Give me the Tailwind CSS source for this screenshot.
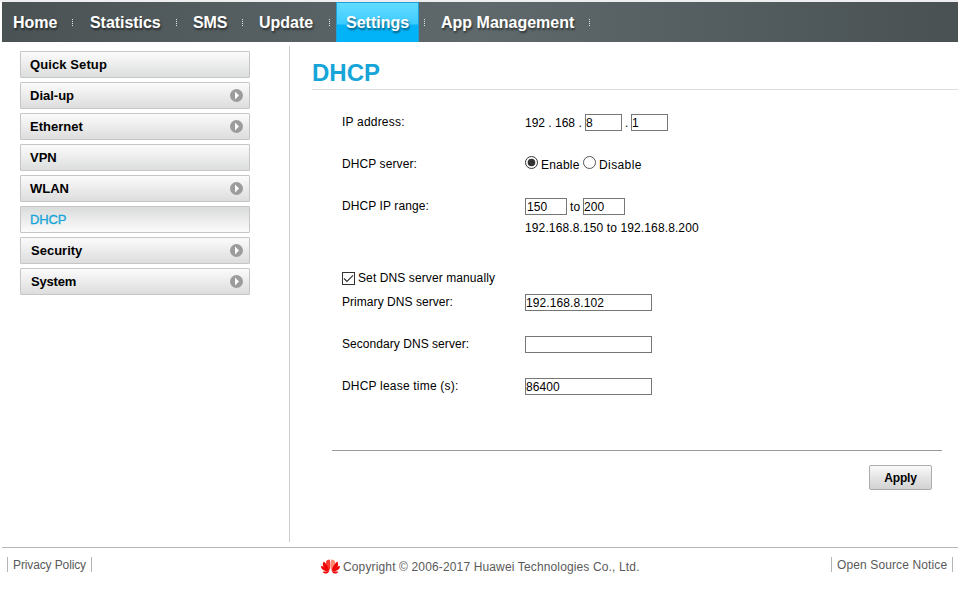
<!DOCTYPE html>
<html lang="en">
  <head>
    <meta charset="UTF-8" />
    <meta name="viewport" content="width=device-width, initial-scale=1.0" />
    <title>DHCP</title>
    <script src="https://cdn.jsdelivr.net/npm/@tailwindcss/browser@4"></script>
  </head>
  <body class="bg-white text-black font-['Liberation_Sans',Arial,sans-serif] text-[12px] leading-4 overflow-hidden">
    <div class="w-[958px] h-[589px] pl-[2px] flex flex-col">

      <!-- Navigation -->
      <nav class="h-[42px] shrink-0 border-t-2 border-[#eeeef0] -ml-[2px] pl-[2px]">
        <div class="h-10 flex items-center bg-linear-to-r from-[#4a5254] via-[#5f696b] to-[#495153] text-white text-[16px] leading-10 font-bold [text-shadow:1px_2px_2px_rgba(0,0,0,0.5)]">
          <a class="w-[70px] pl-[11px] pt-px">Home</a>
          <i class="w-px h-[7px] bg-[repeating-linear-gradient(#e4e8e8_0_1px,transparent_1px_2px)]"></i>
          <a class="w-[103px] pl-[17px] pt-px tracking-[-0.05px]">Statistics</a>
          <i class="w-px h-[7px] bg-[repeating-linear-gradient(#e4e8e8_0_1px,transparent_1px_2px)]"></i>
          <a class="w-[65px] pl-[16px] pt-px tracking-[-0.1px]">SMS</a>
          <i class="w-px h-[7px] bg-[repeating-linear-gradient(#e4e8e8_0_1px,transparent_1px_2px)]"></i>
          <a class="w-[86px] pl-[16px] pt-px">Update</a>
          <i class="w-px h-[7px] bg-[repeating-linear-gradient(#e4e8e8_0_1px,transparent_1px_2px)]"></i>
          <a class="w-[83px] h-10 ml-[6px] pl-[9px] border border-b-0 border-[#1f9fd6] bg-linear-to-b from-[#62dcff] from-0% via-[#3bcbff] via-54% to-[#02b3f8] to-56%">Settings</a>
          <i class="w-px h-[7px] ml-[5px] bg-[repeating-linear-gradient(#e4e8e8_0_1px,transparent_1px_2px)]"></i>
          <a class="w-[164px] pl-[16px] pt-px">App Management</a>
          <i class="w-px h-[7px] bg-[repeating-linear-gradient(#e4e8e8_0_1px,transparent_1px_2px)]"></i>
        </div>
      </nav>

      <!-- Content -->
      <div class="flex h-[505px] shrink-0">
        <aside class="w-[288px] h-[496px] mt-1 pt-[5px] pl-[18px] pr-[39px] border-r border-[#ccc] text-[13px] font-bold">
          <ul class="w-[230px] flex flex-col gap-1">
            <li class="h-[27px] px-[9px] flex items-center justify-between border border-[#c5c7c7] rounded-[1px] bg-linear-to-b from-[#fbfbfb] to-[#dcdedd] tracking-[0.1px]">Quick Setup</li>
            <li class="h-[27px] pl-[9px] pr-[6px] flex items-center justify-between border border-[#c5c7c7] rounded-[1px] bg-linear-to-b from-[#fbfbfb] to-[#dddddd]">Dial-up
              <svg class="size-[13px]" viewBox="0 0 13 13"><circle cx="6.5" cy="6.5" r="6.5" fill="#9c9c9c"/><path d="M5 2.5v8l4-4z" fill="#fff"/></svg></li>
            <li class="h-[27px] pl-[9px] pr-[6px] flex items-center justify-between border border-[#c5c7c7] rounded-[1px] bg-linear-to-b from-[#fbfbfb] to-[#dddddd]">Ethernet
              <svg class="size-[13px]" viewBox="0 0 13 13"><circle cx="6.5" cy="6.5" r="6.5" fill="#9c9c9c"/><path d="M5 2.5v8l4-4z" fill="#fff"/></svg></li>
            <li class="h-[27px] px-[9px] flex items-center justify-between border border-[#c5c7c7] rounded-[1px] bg-linear-to-b from-[#fbfbfb] to-[#dcdedd]">VPN</li>
            <li class="h-[27px] pl-[9px] pr-[6px] flex items-center justify-between border border-[#c5c7c7] rounded-[1px] bg-linear-to-b from-[#fbfbfb] to-[#dddddd]">WLAN
              <svg class="size-[13px]" viewBox="0 0 13 13"><circle cx="6.5" cy="6.5" r="6.5" fill="#9c9c9c"/><path d="M5 2.5v8l4-4z" fill="#fff"/></svg></li>
            <li class="h-[27px] px-[9px] flex items-center justify-between border border-[#c5c7c7] rounded-[1px] bg-linear-to-b from-[#dadcdb] to-[#fbfbfb] font-normal text-[#16a5d8] [-webkit-text-stroke:0.3px_#16a5d8] tracking-[-0.1px]">DHCP</li>
            <li class="h-[27px] pl-[10px] pr-[6px] flex items-center justify-between border border-[#c5c7c7] rounded-[1px] bg-linear-to-b from-[#fbfbfb] to-[#dddddd]">Security
              <svg class="size-[13px]" viewBox="0 0 13 13"><circle cx="6.5" cy="6.5" r="6.5" fill="#9c9c9c"/><path d="M5 2.5v8l4-4z" fill="#fff"/></svg></li>
            <li class="h-[27px] pl-[10px] pr-[6px] flex items-center justify-between border border-[#c5c7c7] rounded-[1px] bg-linear-to-b from-[#fbfbfb] to-[#dddddd] tracking-[-0.2px]">System
              <svg class="size-[13px]" viewBox="0 0 13 13"><circle cx="6.5" cy="6.5" r="6.5" fill="#9c9c9c"/><path d="M5 2.5v8l4-4z" fill="#fff"/></svg></li>
          </ul>
        </aside>

        <main class="flex-1 pl-[22px]">
          <h1 class="h-12 pt-[17px] border-b border-[#ddd] text-[24px] leading-7 font-bold text-[#16a5d8]">DHCP</h1>

          <form class="pt-[24px] pl-[30px] tracking-[0.1px]">
            <div class="flex h-[42px]">
              <label class="w-[183px] tracking-[0.2px]">IP address:</label>
              <div class="flex h-[17px]">
                <span class="w-[60px] pt-px tracking-normal">192 . 168 .</span>
                <input class="w-[37px] h-[17px] border border-[#767676]" value="8" />
                <span class="w-[9px] pt-px pl-[3px]">.</span>
                <input class="w-[37px] h-[17px] border border-[#767676]" value="1" />
              </div>
            </div>
            <div class="flex h-[42px]">
              <label class="w-[183px]">DHCP server:</label>
              <div class="flex h-[17px]">
                <svg class="size-[13px]" viewBox="0 0 13 13"><circle cx="6.5" cy="6.5" r="6" fill="#fff" stroke="#333"/><circle cx="6.5" cy="6.5" r="3.8" fill="#333"/></svg>
                <span class="w-[45px] pl-[3px] pt-px tracking-[0.2px]">Enable</span>
                <svg class="size-[13px]" viewBox="0 0 13 13"><circle cx="6.5" cy="6.5" r="6" fill="#fff" stroke="#555"/></svg>
                <span class="pl-[3px] pt-px tracking-[0.4px]">Disable</span>
              </div>
            </div>
            <div class="flex h-[72px]">
              <label class="w-[183px]">DHCP IP range:</label>
              <div>
                <div class="flex h-[17px]">
                  <input class="w-[42px] h-[17px] border border-[#767676] pl-[1px]" value="150" />
                  <span class="w-[16px] pl-[3px] pt-px">to</span>
                  <input class="w-[42px] h-[17px] border border-[#767676]" value="200" />
                </div>
                <p class="pt-[5px] tracking-[0.12px]">192.168.8.150 to 192.168.8.200</p>
              </div>
            </div>
            <div class="flex h-[24px]">
              <svg class="size-[13px] mt-[2px] mr-[3px]" viewBox="0 0 13 13"><rect x=".5" y=".5" width="12" height="12" fill="#fff" stroke="#333"/><path d="M2 6.5l3 3 6-6.2" fill="none" stroke="#333" stroke-width="1.2"/></svg>
              <label>Set DNS server manually</label>
            </div>
            <div class="flex h-[42px]">
              <label class="w-[183px] tracking-[0.05px]">Primary DNS server:</label>
              <input class="w-[127px] h-[17px] border border-[#767676]" value="192.168.8.102" />
            </div>
            <div class="flex h-[42px]">
              <label class="w-[183px] tracking-[0.05px]">Secondary DNS server:</label>
              <input class="w-[127px] h-[17px] border border-[#767676]" />
            </div>
            <div class="flex h-[72px]">
              <label class="w-[183px] tracking-[0.2px]">DHCP lease time (s):</label>
              <input class="w-[127px] h-[17px] border border-[#767676]" value="86400" />
            </div>
          </form>

          <div class="ml-[20px] mr-[16px] pt-[14px] pr-[10px] flex justify-end border-t border-[#999]">
            <button class="w-[63px] h-[25px] border border-[#acacac] rounded-[2px] bg-linear-to-b from-[#fafafa] via-[#e4e4e4] to-[#d2d2d2] text-[12px] font-bold tracking-[-0.2px]">Apply</button>
          </div>
        </main>
      </div>

      <!-- Footer -->
      <footer class="flex border-t border-[#b5b5b5] pt-[9px] px-[5px] text-[#5a5a5a]">
        <a class="w-[85px] h-[15px] pl-[5px] border-x border-[#b5b5b5] tracking-[-0.12px]">Privacy Policy</a>
        <div class="flex pt-[2px] ml-[229px]">
          <svg class="w-[19px] h-[15px] mr-[3px]" viewBox="0 0 19 15">
            <g fill="#f00505">
              <path d="M8.9 11C6 8 4.600 4.500 5 2.800 5.400 1.300 7 .6 8.700.6c.9 2.400.9 7 .2 10.400z" fill="#fa3a30"/>
              <path d="M8.500 11.600C7.600 8 5.500 4.500 2.700 2.500.3 6.500 3.200 10 8.500 11.600z"/>
              <path d="M8.300 12C6 9.500 3 7.500.1 6.800c-.2 4.200 3.600 6 8.200 5.200z"/>
              <path d="M8.300 12.300c-2.300-.3-4.900-.1-6.900.5 2 2.600 5.200 2.400 6.900-.5z"/>
              <path d="M10.100 11c2.900-3 4.300-6.500 3.900-8.200C13.600 1.300 12 .6 10.300.6c-.9 2.400-.9 7-.2 10.400z" fill="#fa8a70"/>
              <path d="M10.500 11.600c.9-3.600 3-7.100 5.800-9.100 2.400 4-.5 7.500-5.800 9.100z"/>
              <path d="M10.700 12c2.300-2.500 5.300-4.500 8.200-5.200.2 4.200-3.600 6-8.200 5.200z"/>
              <path d="M10.700 12.300c2.300-.3 4.900-.1 6.900.5-2 2.600-5.200 2.400-6.900-.5z"/>
            </g>
          </svg>
          <span class="tracking-[0.14px]">Copyright © 2006-2017 Huawei Technologies Co., Ltd.</span>
        </div>
        <a class="ml-auto w-[122px] h-[15px] pl-[5px] border-x border-[#b5b5b5] tracking-[0.12px]">Open Source Notice</a>
      </footer>
    </div>
  </body>
</html>
